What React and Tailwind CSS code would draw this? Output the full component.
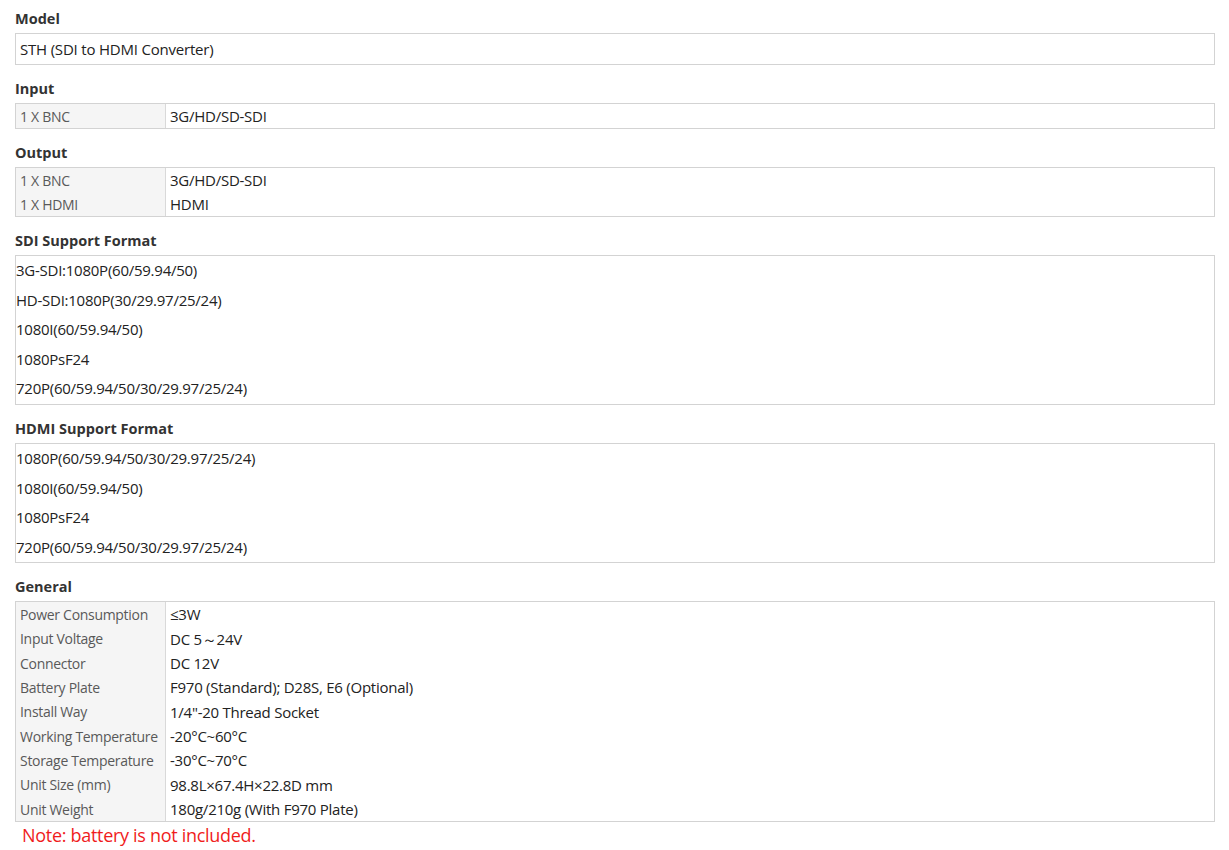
import React from "react";

const font = { fontFamily: '"Open Sans", "Noto Sans", "Liberation Sans", sans-serif' };

const output = [
  ["1 X BNC", "3G/HD/SD-SDI"],
  ["1 X HDMI", "HDMI"],
];

const sdiFormats = [
  "3G-SDI:1080P(60/59.94/50)",
  "HD-SDI:1080P(30/29.97/25/24)",
  "1080I(60/59.94/50)",
  "1080PsF24",
  "720P(60/59.94/50/30/29.97/25/24)",
];

const hdmiFormats = [
  "1080P(60/59.94/50/30/29.97/25/24)",
  "1080I(60/59.94/50)",
  "1080PsF24",
  "720P(60/59.94/50/30/29.97/25/24)",
];

const general = [
  ["Power Consumption", "≤3W"],
  ["Input Voltage", "DC 5～24V"],
  ["Connector", "DC 12V"],
  ["Battery Plate", "F970 (Standard); D28S, E6 (Optional)"],
  ["Install Way", "1/4\"-20 Thread Socket"],
  ["Working Temperature", "-20°C~60°C"],
  ["Storage Temperature", "-30°C~70°C"],
  ["Unit Size (mm)", "98.8L×67.4H×22.8D mm"],
  ["Unit Weight", "180g/210g (With F970 Plate)"],
];

const Heading = ({ children, first }) => (
  <h3
    className={`${first ? "mt-0" : "mt-[14px]"} mb-[4px] h-[20px] leading-[20px] text-[14.5px] font-bold text-[#333]`}
  >
    {children}
  </h3>
);

const SpecTable = ({ rows, rowH = "h-[24px]" }) => (
  <div className="border border-[#d3d3d3] grid grid-cols-[150px_1fr]">
    {rows.map(([label, value]) => (
      <React.Fragment key={label}>
        <div
          className={`${rowH} flex items-center pl-[4px] bg-[#f5f5f5] border-r border-[#d9d9d9] text-[14px] text-[#595959] tracking-[-0.3px] whitespace-nowrap`}
        >
          {label}
        </div>
        <div className={`${rowH} flex items-center pl-[4px] text-[15px] text-[#222] tracking-[-0.25px]`}>
          {value}
        </div>
      </React.Fragment>
    ))}
  </div>
);

const LineBox = ({ lines }) => (
  <div className="border border-[#d3d3d3]">
    {lines.map((line) => (
      <p key={line} className="h-[29.6px] leading-[29.6px] text-[15px] text-[#222] tracking-[-0.25px]">
        {line}
      </p>
    ))}
  </div>
);

export default function App() {
  return (
    <div className="bg-white w-[1229px] h-[850px] overflow-hidden" style={font}>
      <div className="w-[1200px] ml-[15px] pt-[9px]">
        <Heading first>Model</Heading>
        <div className="border border-[#d3d3d3] h-[32px] flex items-center pl-[4px] text-[15px] text-[#222] tracking-[-0.2px]">
          STH (SDI to HDMI Converter)
        </div>

        <Heading>Input</Heading>
        <SpecTable rows={[["1 X BNC", "3G/HD/SD-SDI"]]} />

        <Heading>Output</Heading>
        <SpecTable rows={output} />

        <Heading>SDI Support Format</Heading>
        <LineBox lines={sdiFormats} />

        <Heading>HDMI Support Format</Heading>
        <LineBox lines={hdmiFormats} />

        <Heading>General</Heading>
        <SpecTable rows={general} rowH="h-[24.33px]" />

        <p className="h-[26px] leading-[26px] pl-[7px] text-[18px] text-[#f01c1c] tracking-[-0.3px]">
          Note: battery is not included.
        </p>
      </div>
    </div>
  );
}
